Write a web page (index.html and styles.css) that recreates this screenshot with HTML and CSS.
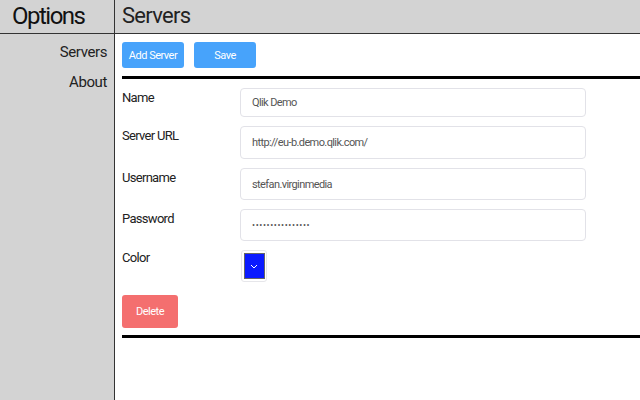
FILE: index.html
```html
<!DOCTYPE html>
<html>
<head>
<meta charset="utf-8">
<link rel="stylesheet" href="styles.css">
</head>
<body>
<div class="app">
  <aside class="sidebar">
    <div class="side-head">Options</div>
    <nav class="side-nav">
      <a class="nav-link">Servers</a>
      <a class="nav-link">About</a>
    </nav>
  </aside>
  <main class="main">
    <div class="main-head">Servers</div>
    <div class="main-body">
      <div class="toolbar">
        <button class="btn btn-blue btn-add">Add Server</button>
        <button class="btn btn-blue btn-save">Save</button>
      </div>
      <div class="server">
        <div class="row r1"><label class="lbl">Name</label><div class="input">Qlik Demo</div></div>
        <div class="row r2"><label class="lbl">Server URL</label><div class="input">http://eu-b.demo.qlik.com/</div></div>
        <div class="row r3"><label class="lbl">Username</label><div class="input">stefan.virginmedia</div></div>
        <div class="row r4"><label class="lbl">Password</label><div class="input pw">••••••••••••••••</div></div>
        <div class="row r5"><label class="lbl">Color</label>
          <div class="color"><div class="swatch"><svg width="8" height="5" viewBox="0 0 8 5"><path d="M1 1 L4 4 L7 1" fill="none" stroke="#fff" stroke-width="1"/></svg></div></div>
        </div>
        <div class="del-row"><button class="btn btn-red">Delete</button></div>
      </div>
    </div>
  </main>
</div>
</body>
</html>
```
FILE: styles.css
```css
* { box-sizing: border-box; }
html, body { margin: 0; padding: 0; }
body {
  width: 640px; height: 400px; overflow: hidden;
  font-family: Roboto, "Liberation Sans", sans-serif;
  color: #222;
  background: #fff;
}
.app { display: grid; grid-template-columns: 115px 1fr; height: 400px; }
.sidebar { background: #d3d3d3; border-right: 1px solid #333; }
.side-head {
  height: 34px; border-bottom: 1px solid #333;
  font-size: 24px; letter-spacing: -1.5px; line-height: 33px; padding-left: 12px; color: #111;
}
.side-nav { display: flex; flex-direction: column; align-items: flex-end; padding: 8px 7px 0 0; gap: 10px; }
.nav-link { font-size: 15px; letter-spacing: -0.4px; line-height: 20px; color: #222; }
.main { display: flex; flex-direction: column; }
.main-head {
  height: 34px; background: #d3d3d3; border-bottom: 1px solid #333;
  font-size: 22px; letter-spacing: -0.7px; line-height: 32px; padding-left: 7px; color: #222;
}
.main-body { padding-left: 7px; }
.toolbar { display: flex; gap: 10px; padding-top: 8px; height: 45px; border-bottom: 3px solid #000; }
.btn {
  border: none; border-radius: 3px; color: #fff;
  font-family: Roboto, "Liberation Sans", sans-serif; font-size: 11px; letter-spacing: -0.5px;
  height: 26px; padding: 0; cursor: pointer;
}
.btn-blue { background: #47a3fb; }
.btn-add { width: 62px; }
.btn-save { width: 62px; }
.server { padding-top: 9px; border-bottom: 3px solid #000; padding-bottom: 7px; }
.row { display: flex; margin-bottom: 9px; }
.lbl { width: 118px; font-size: 13px; letter-spacing: -0.7px; padding-top: 2px; color: #222; }
.input {
  width: 346px; border: 1px solid #e2e2e8; border-radius: 4px;
  font-size: 11px; letter-spacing: -0.6px; color: #555; padding-left: 11px; display: flex; align-items: center;
}
.r1 .input { height: 29px; }
.r2 .input { height: 33px; }
.r3 .input, .r4 .input { height: 32px; }
.pw { letter-spacing: 0.6px; font-size: 9px; }
.r5 { margin-bottom: 13px; }
.r5 .lbl { padding-top: 0; }
.color {
  margin-left: 1px; width: 26px; height: 32px; border: 1px solid #e6e6ea; border-radius: 3px;
  display: flex; align-items: center; justify-content: center;
}
.swatch {
  width: 21px; height: 26px; background: #0a1aff; border: 1px solid #666;
  display: flex; align-items: center; justify-content: center;
}
.btn-red { background: #f46f6f; width: 56px; height: 33px; }
```
